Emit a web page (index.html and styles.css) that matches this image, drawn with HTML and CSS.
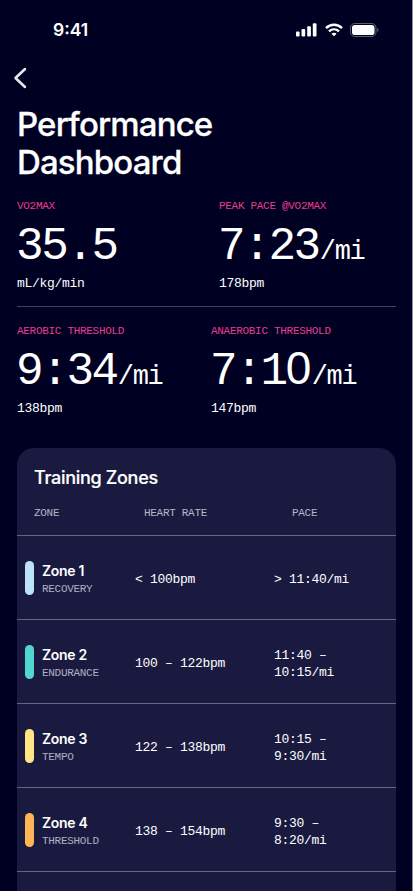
FILE: index.html
```html
<!DOCTYPE html>
<html lang="en">
<head>
    <meta charset="UTF-8">
    <meta name="viewport" content="width=device-width, initial-scale=1.0">
    <title>Performance Dashboard</title>
    <link rel="stylesheet" href="styles.css">
</head>
<body>
    <div class="screen">
        <div class="status-bar">
            <span class="time">9:41</span>
            <div class="status-icons">
                <svg width="21" height="14" viewBox="0 0 21 14" fill="#fff">
                    <rect x="0" y="8.5" width="3.6" height="5" rx="1"/>
                    <rect x="5.5" y="6" width="3.7" height="7.5" rx="1"/>
                    <rect x="11.2" y="3.3" width="3.7" height="10.2" rx="1"/>
                    <rect x="16.8" y="0.3" width="3.7" height="13.2" rx="1"/>
                </svg>
                <svg class="wifi" width="18" height="14" viewBox="0 0 18 14" fill="none" stroke="#fff" stroke-width="2.4">
                    <path d="M1 5.1C5.5 .7 12.5 .7 17 5.1"/>
                    <path d="M4 8.4c2.9-2.7 7.1-2.7 10 0"/>
                    <path d="M9 13.3l-2.6-2.5c1.5-1.3 3.7-1.3 5.2 0z" fill="#fff" stroke="none"/>
                </svg>
                <svg class="battery" width="29" height="14" viewBox="0 0 29 14">
                    <rect x="0.5" y="0.5" width="25.5" height="13" rx="4.2" fill="none" stroke="#5c5c70"/>
                    <rect x="2" y="2" width="22.5" height="10" rx="2.8" fill="#fff"/>
                    <path d="M27.3 5v4c1.5-.6 1.5-3.4 0-4z" fill="#6b6b7c"/>
                </svg>
            </div>
        </div>

        <header>
            <svg class="back" width="14" height="22" viewBox="0 0 14 22" fill="none" stroke="#e9e9f5" stroke-width="2.5" stroke-linecap="round" stroke-linejoin="round">
                <path d="M12 2L2.5 11l9.5 9"/>
            </svg>
            <h1>Performance<br>Dashboard</h1>
        </header>

        <section class="stats stats-top">
            <div class="stat">
                <div class="stat-label">VO2MAX</div>
                <div class="stat-value">35.5</div>
                <div class="stat-note">mL/kg/min</div>
            </div>
            <div class="stat">
                <div class="stat-label">PEAK PACE @VO2MAX</div>
                <div class="stat-value">7:23<span class="unit">/mi</span></div>
                <div class="stat-note">178bpm</div>
            </div>
        </section>

        <section class="stats stats-bottom">
            <div class="stat">
                <div class="stat-label">AEROBIC THRESHOLD</div>
                <div class="stat-value">9:34<span class="unit">/mi</span></div>
                <div class="stat-note">138bpm</div>
            </div>
            <div class="stat">
                <div class="stat-label">ANAEROBIC THRESHOLD</div>
                <div class="stat-value">7:1<span class="zero">0</span><span class="unit">/mi</span></div>
                <div class="stat-note">147bpm</div>
            </div>
        </section>

        <section class="zones">
            <h2>Training Zones</h2>
            <div class="zones-head">
                <span>ZONE</span>
                <span>HEART RATE</span>
                <span>PACE</span>
            </div>
            <div class="zone-row">
                <span class="pill recovery"></span>
                <div>
                    <div class="zone-name">Zone 1</div>
                    <div class="zone-type">RECOVERY</div>
                </div>
                <div class="zone-data">&lt; 100bpm</div>
                <div class="zone-data">&gt; 11:40/mi</div>
            </div>
            <div class="zone-row">
                <span class="pill endurance"></span>
                <div>
                    <div class="zone-name">Zone 2</div>
                    <div class="zone-type">ENDURANCE</div>
                </div>
                <div class="zone-data">100 – 122bpm</div>
                <div class="zone-data">11:40 –<br>10:15/mi</div>
            </div>
            <div class="zone-row">
                <span class="pill tempo"></span>
                <div>
                    <div class="zone-name">Zone 3</div>
                    <div class="zone-type">TEMPO</div>
                </div>
                <div class="zone-data">122 – 138bpm</div>
                <div class="zone-data">10:15 –<br>9:30/mi</div>
            </div>
            <div class="zone-row">
                <span class="pill threshold"></span>
                <div>
                    <div class="zone-name">Zone 4</div>
                    <div class="zone-type">THRESHOLD</div>
                </div>
                <div class="zone-data">138 – 154bpm</div>
                <div class="zone-data">9:30 –<br>8:20/mi</div>
            </div>
            <div class="zone-row"></div>
        </section>
    </div>
</body>
</html>
```

FILE: styles.css
```css
* {
    margin: 0;
    padding: 0;
    box-sizing: border-box;
}

body {
    background-color: #000022;
    color: #fff;
    font-family: Inter, 'Liberation Sans', sans-serif;
}

svg {
    display: block;
}

.screen {
    height: 891px;
    overflow: hidden;
    padding: 0 16px 0 17px;
    border-right: 1px solid #8c8c9e;
}

.status-bar {
    display: flex;
    justify-content: space-between;
    align-items: center;
    height: 59px;
    padding: 0 17px 0 36px;
}

.time {
    font-size: 17.5px;
    font-weight: 600;
}

.status-icons {
    display: flex;
}

.wifi {
    margin-left: 8px;
}

.battery {
    margin-left: 7px;
}

.back {
    margin: 8px 0 0 -4px;
}

h1 {
    margin-top: 16px;
    font-size: 33px;
    font-weight: 500;
    line-height: 38px;
    letter-spacing: -0.85px;
    -webkit-text-stroke: 0.3px #fff;
}

.stats {
    display: grid;
    font-family: 'Liberation Mono', monospace;
}

.stats-top {
    grid-template-columns: 202px 1fr;
    height: 126px;
    padding-top: 18px;
    border-bottom: 1px solid #42425f;
}

.stats-bottom {
    grid-template-columns: 194px 1fr;
    height: 141px;
    padding-top: 17px;
}

.stat-label {
    font-size: 11px;
    line-height: 14px;
    letter-spacing: -0.3px;
    color: #e83e8c;
}

.stat-value {
    height: 54px;
    margin: 7px 0 0 -1px;
    font-size: 46px;
    line-height: 54px;
    letter-spacing: -2.4px;
    white-space: nowrap;
}

.unit {
    margin-left: 1px;
    font-size: 27px;
    line-height: 1;
    letter-spacing: -1.4px;
}

/* plain zero without the inner dot */
.zero {
    font-family: 'Liberation Sans', sans-serif;
    line-height: 1;
    letter-spacing: -0.4px;
}

.stat-note {
    margin-top: 1px;
    font-size: 13px;
    line-height: 17px;
    letter-spacing: -0.3px;
}

.zones {
    height: 500px;
    background-color: #1a1a40;
    border-radius: 17px 17px 0 0;
}

h2 {
    padding: 18px 0 0 17px;
    font-size: 18px;
    font-weight: 500;
    line-height: 24px;
    letter-spacing: -0.3px;
    -webkit-text-stroke: 0.2px #fff;
}

.zones-head {
    display: grid;
    grid-template-columns: 110px 148px 1fr;
    height: 45px;
    padding: 16px 0 0 17px;
    font-family: 'Liberation Mono', monospace;
    font-size: 11px;
    line-height: 14px;
    letter-spacing: -0.3px;
    color: #b5b5c4;
}

.zone-row {
    display: grid;
    grid-template-columns: 17px 93px 139px 1fr;
    align-items: center;
    height: 84px;
    padding-left: 8px;
    border-top: 1px solid #65657f;
}

.pill {
    width: 9px;
    height: 34px;
    border-radius: 5px;
}

.recovery {
    background-color: #bde3f8;
}

.endurance {
    background-color: #50d8d0;
}

.tempo {
    background-color: #ffe584;
}

.threshold {
    background-color: #ffb555;
}

.zone-name {
    padding-top: 2px;
    font-size: 14px;
    font-weight: 600;
    line-height: 20px;
    letter-spacing: -0.3px;
}

.zone-type {
    font-family: 'Liberation Mono', monospace;
    font-size: 11px;
    line-height: 16px;
    letter-spacing: -0.3px;
    color: #b0b0c0;
}

.zone-data {
    padding-top: 4px;
    font-family: 'Liberation Mono', monospace;
    font-size: 13px;
    line-height: 17px;
    letter-spacing: -0.3px;
}
```
